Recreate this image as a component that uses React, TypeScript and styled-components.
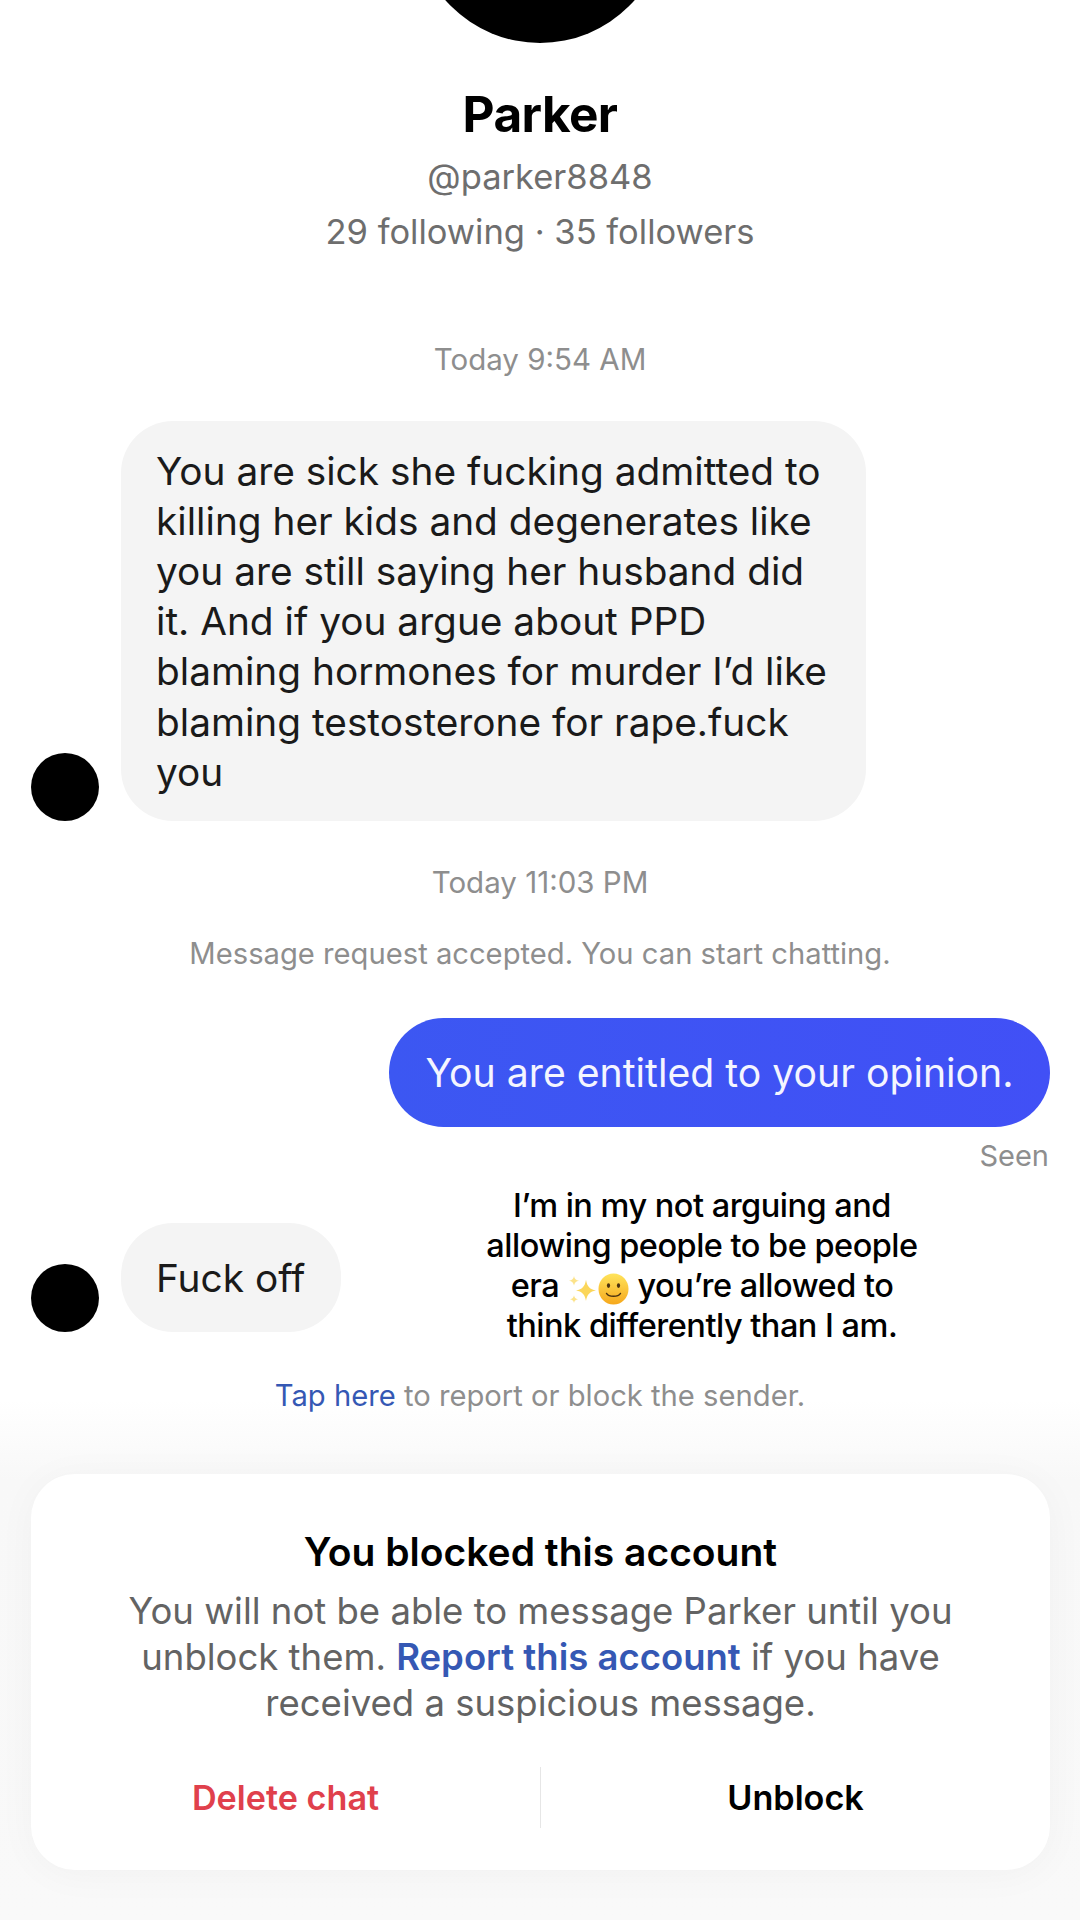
import React from 'react'
import styled, { createGlobalStyle } from 'styled-components'

const GlobalStyle = createGlobalStyle`
  html, body {
    margin: 0;
    padding: 0;
    background: #ffffff;
  }
  body {
    font-family: Inter, "Liberation Sans", sans-serif;
  }
`

const Page = styled.div`
  position: relative;
  width: 1080px;
  height: 1920px;
  overflow: hidden;
  display: flex;
  flex-direction: column;
  background: linear-gradient(to bottom, #ffffff 0, #ffffff 1400px, #f8f8f8 1480px, #f9f9f9 1920px);
`

const ProfileAvatar = styled.div`
  flex: none;
  align-self: center;
  width: 252px;
  height: 252px;
  margin-top: -209px;
  border-radius: 50%;
  background: #000;
`

const Name = styled.div`
  margin-top: 41px;
  height: 60px;
  line-height: 60px;
  text-align: center;
  font-size: 49.5px;
  font-weight: 700;
  letter-spacing: -0.6px;
  color: #000;
`

const ProfileLine = styled.div<{ $top: number }>`
  margin-top: ${({ $top }) => $top}px;
  height: 44px;
  line-height: 44px;
  text-align: center;
  font-size: 34.5px;
  color: #6e6e6e;
`

const Stamp = styled.div<{ $top: number; $size: number }>`
  margin-top: ${({ $top }) => $top}px;
  height: 40px;
  line-height: 40px;
  text-align: center;
  font-size: ${({ $size }) => $size}px;
  color: #8e8e8e;
`

const IncomingRow = styled.div<{ $top: number }>`
  position: relative;
  margin-top: ${({ $top }) => $top}px;
  padding-left: 31px;
  display: flex;
  align-items: flex-end;
  gap: 22px;
`

const SmallAvatar = styled.div`
  flex: none;
  width: 68px;
  height: 68px;
  border-radius: 50%;
  background: #000;
`

const IncomingBubble = styled.div<{ $width: number; $padY: number }>`
  box-sizing: border-box;
  width: ${({ $width }) => $width}px;
  padding: ${({ $padY }) => $padY}px 35px;
  border-radius: 52px;
  background: #f4f4f4;
  color: #1a1a1a;
  font-size: 38.8px;
  line-height: 50.2px;
  white-space: pre-line;
`

const OutgoingRow = styled.div`
  margin-top: 44px;
  padding-right: 30px;
  display: flex;
  justify-content: flex-end;
`

const OutgoingBubble = styled.div`
  box-sizing: border-box;
  width: 661px;
  height: 109px;
  line-height: 109px;
  text-align: center;
  border-radius: 55px;
  background: linear-gradient(to right, #3c57f2, #4150f6);
  color: #f4f5ff;
  font-size: 39.2px;
  white-space: nowrap;
`

const Seen = styled.div`
  margin-top: 9px;
  padding-right: 31px;
  height: 40px;
  line-height: 40px;
  text-align: right;
  font-size: 29px;
  color: #8e8e8e;
`

const Sticker = styled.div`
  position: absolute;
  left: 442px;
  top: -37px;
  width: 520px;
  text-align: center;
  color: #000;
  font-size: 32.5px;
  font-weight: 500;
  line-height: 40px;
  letter-spacing: -0.5px;
  white-space: pre-line;
`

const EmojiIcon = styled.svg`
  display: inline-block;
  width: 31px;
  height: 32px;
  margin: -2px 0;
  vertical-align: -6px;
`

const Notice = styled.div`
  margin-top: 44px;
  height: 40px;
  line-height: 40px;
  text-align: center;
  font-size: 29.2px;
  color: #8e8e8e;
`

const BlueText = styled.span`
  color: #3558b4;
`

const Card = styled.div`
  box-sizing: border-box;
  margin: 58px 30px 0 31px;
  height: 396px;
  padding-top: 52px;
  border-radius: 44px;
  background: #fff;
  box-shadow: 0 4px 40px rgba(0, 0, 0, 0.035);
  display: flex;
  flex-direction: column;
`

const CardTitle = styled.div`
  height: 52px;
  line-height: 52px;
  text-align: center;
  font-size: 39px;
  font-weight: 600;
  color: #000;
`

const CardBody = styled.div`
  margin-top: 10px;
  text-align: center;
  font-size: 36.5px;
  line-height: 46px;
  color: #636363;
  white-space: pre-line;
`

const ReportLink = styled.span`
  color: #3558b4;
  font-weight: 600;
`

const Actions = styled.div`
  margin-top: 41px;
  display: grid;
  grid-template-columns: 1fr 1px 1fr;
  height: 61px;
`

const ActionDivider = styled.div`
  background: #e6e6e6;
`

const ActionButton = styled.div<{ $danger?: boolean }>`
  display: flex;
  align-items: center;
  justify-content: center;
  font-size: 34.2px;
  font-weight: 600;
  color: ${({ $danger }) => ($danger ? '#e0404c' : '#000')};
`

function Sparkles() {
  return (
    <EmojiIcon viewBox="0 0 31 33" preserveAspectRatio="none">
      <path d="M19 7 C20 14 23 17 29 18 C23 19 20 22 19 29 C18 22 15 19 9 18 C15 17 18 14 19 7 Z" fill="#fbd65a" />
      <path d="M7 3 C7.5 6 9 7.5 12 8 C9 8.5 7.5 10 7 13 C6.5 10 5 8.5 2 8 C5 7.5 6.5 6 7 3 Z" fill="#fce38a" />
      <path d="M7 23 C7.4 25.5 8.5 26.6 11 27 C8.5 27.4 7.4 28.5 7 31 C6.6 28.5 5.5 27.4 3 27 C5.5 26.6 6.6 25.5 7 23 Z" fill="#fce38a" />
    </EmojiIcon>
  )
}

function Smiley() {
  return (
    <EmojiIcon viewBox="0 0 31 33" preserveAspectRatio="none">
      <defs>
        <linearGradient id="smile-face" x1="0" y1="0" x2="0" y2="1">
          <stop offset="0" stopColor="#ffe45c" />
          <stop offset="1" stopColor="#f6a81c" />
        </linearGradient>
      </defs>
      <ellipse cx="15.5" cy="16.5" rx="15" ry="16" fill="url(#smile-face)" />
      <ellipse cx="10.5" cy="13" rx="1.6" ry="2.4" fill="#4a3210" />
      <ellipse cx="20.5" cy="13" rx="1.6" ry="2.4" fill="#4a3210" />
      <path d="M8.5 21 C11 25 20 25 22.5 21" fill="none" stroke="#4a3210" strokeWidth="1.4" strokeLinecap="round" />
    </EmojiIcon>
  )
}

export default function App() {
  return (
    <Page>
      <GlobalStyle />
      <ProfileAvatar />
      <Name>Parker</Name>
      <ProfileLine $top={11}>@parker8848</ProfileLine>
      <ProfileLine $top={11}>29 following · 35 followers</ProfileLine>
      <Stamp $top={85} $size={29.5}>
        Today 9:54 AM
      </Stamp>

      <IncomingRow $top={42}>
        <SmallAvatar />
        <IncomingBubble $width={745} $padY={24.5}>
          {`You are sick she fucking admitted to
killing her kids and degenerates like
you are still saying her husband did
it. And if you argue about PPD
blaming hormones for murder I’d like
blaming testosterone for rape.fuck
you`}
        </IncomingBubble>
      </IncomingRow>

      <Stamp $top={41} $size={29.5}>
        Today 11:03 PM
      </Stamp>
      <Stamp $top={32} $size={29.2}>
        Message request accepted. You can start chatting.
      </Stamp>

      <OutgoingRow>
        <OutgoingBubble>You are entitled to your opinion.</OutgoingBubble>
      </OutgoingRow>
      <Seen>Seen</Seen>

      <IncomingRow $top={47}>
        <SmallAvatar />
        <IncomingBubble $width={220} $padY={29.4}>
          Fuck off
        </IncomingBubble>
        <Sticker>
          {`I’m in my not arguing and
allowing people to be people
`}
          era <Sparkles />
          <Smiley />
          {` you’re allowed to
think differently than I am.`}
        </Sticker>
      </IncomingRow>

      <Notice>
        <BlueText>Tap here</BlueText> to report or block the sender.
      </Notice>

      <Card>
        <CardTitle>You blocked this account</CardTitle>
        <CardBody>
          {`You will not be able to message Parker until you
unblock them. `}
          <ReportLink>Report this account</ReportLink>
          {` if you have
received a suspicious message.`}
        </CardBody>
        <Actions>
          <ActionButton $danger>Delete chat</ActionButton>
          <ActionDivider />
          <ActionButton>Unblock</ActionButton>
        </Actions>
      </Card>
    </Page>
  )
}
